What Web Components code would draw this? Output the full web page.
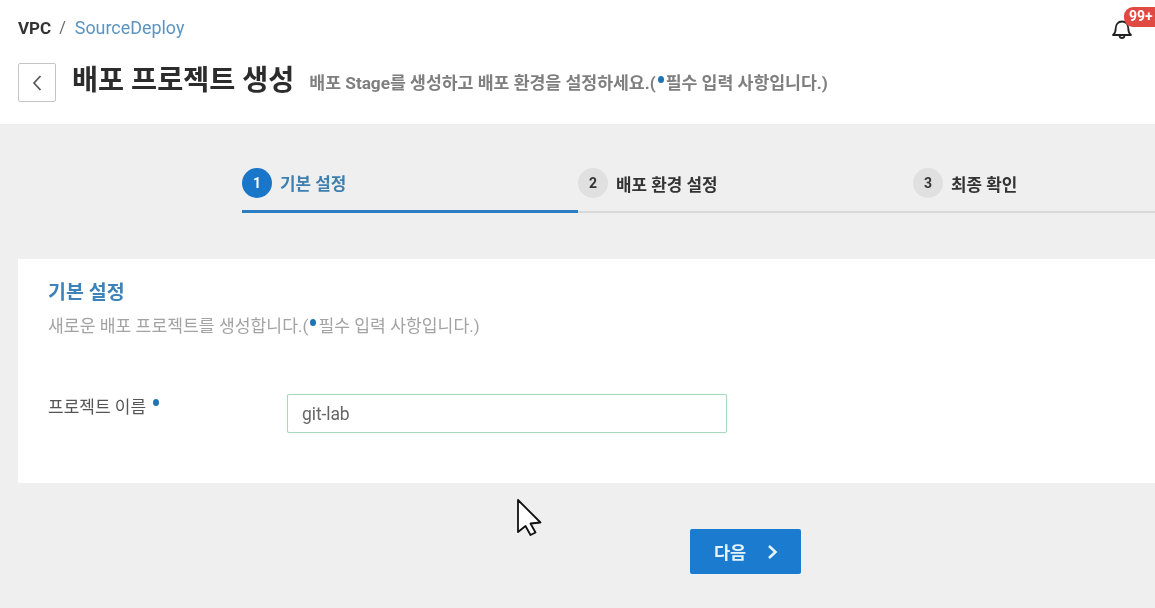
<!DOCTYPE html>
<html lang="ko">
<head>
<meta charset="utf-8">
<title>SourceDeploy</title>
<style>
  html, body { margin: 0; height: 608px; overflow: hidden; background: #efefef; }
  body { font-family: Roboto, "Noto Sans CJK KR", sans-serif; color: #333; }
</style>
</head>
<body>
<deploy-page></deploy-page>
<script>
const KR = `Roboto, "Noto Sans CJK KR", sans-serif`;

class PageHeader extends HTMLElement {
  constructor() {
    super();
    this.attachShadow({ mode: 'open' }).innerHTML = `
      <style>
        :host { display: block; height: 124px; background: #fff; padding: 17px 0 0 18px; box-sizing: border-box; position: relative; font-family: ${KR}; }
        .crumbs { display: flex; align-items: center; height: 21px; color: #333; }
        .crumbs b { font-weight: 700; font-size: 17px; }
        .crumbs i { font-style: normal; color: #666; font-size: 16px; margin: 0 9px 0 4px; }
        .crumbs a { color: #5b94c0; font-size: 17.9px; }
        .title { display: flex; align-items: center; margin-top: 25px; height: 39px; }
        .back { width: 38px; height: 39px; box-sizing: border-box; border: 1px solid #c4c4c4; border-radius: 2px; background: #fff; display: flex; align-items: center; justify-content: center; padding: 0; }
        h1 { margin: -3px 0 0 16px; font-size: 28.3px; font-weight: 700; color: #2c2c2c; white-space: nowrap; line-height: 38px; }
        p { margin: -3px 0 0 15px; font-size: 17.3px; font-weight: 700; color: #7f7f7f; white-space: nowrap; letter-spacing: -0.05px; }
        p em { display: inline-block; width: 6px; height: 7px; border-radius: 50%; background: #1f74b5; margin: 0 2px 0 2px; vertical-align: 6px; }
        .bell { position: absolute; left: 1110px; top: 17px; width: 24px; height: 22px; }
        .badge { position: absolute; left: 1124px; top: 7px; width: 36px; height: 20px; box-sizing: border-box; padding-left: 5px; border-radius: 9px 0 0 9px; background: #e04a42; color: #fff; font-size: 14px; font-weight: 700; line-height: 19px; }
      </style>
      <div class="crumbs"><b>VPC</b>&nbsp;<i>/</i><a>SourceDeploy</a></div>
      <div class="title">
        <button class="back" aria-label="뒤로">
          <svg width="12" height="18" viewBox="0 0 12 18" fill="none" stroke="#555" stroke-width="1.7"><path d="M9.500 2 3 9l6.500 7"/></svg>
        </button>
        <h1>배포 프로젝트 생성</h1>
        <p>배포 Stage를 생성하고 배포 환경을 설정하세요.(<em></em>필수 입력 사항입니다.)</p>
      </div>
      <svg class="bell" viewBox="0 0 24 22" fill="none" stroke="#222" stroke-width="1.8">
        <path d="M3 18c2-1.500 2.700-3 2.700-6.500C5.700 7.500 8 4.500 12 4.500s6.300 3 6.300 7c0 3.500.7 5 2.700 6.500z" stroke-linejoin="round"/>
        <path d="M9.500 19c.3 1.500 1.200 2 2.500 2s2.200-.5 2.500-2"/>
      </svg>
      <span class="badge">99+</span>
    `;
  }
}
customElements.define('page-header', PageHeader);

class StepItem extends HTMLElement {
  constructor() {
    super();
    this.attachShadow({ mode: 'open' }).innerHTML = `
      <style>
        :host { display: flex; align-items: center; gap: 8px; box-sizing: border-box; height: 58px; border-bottom: 2px solid #d8d8d8; font-family: ${KR}; font-size: 16.9px; font-weight: 700; color: #333; }
        :host([active]) { border-bottom: 3px solid #2a7dc0; color: #3f7fb0; }
        .num { width: 30px; height: 30px; border-radius: 50%; background: #e0e0e0; color: #333; display: flex; align-items: center; justify-content: center; font-size: 14px; font-weight: 700; }
        :host([active]) .num { background: #1976c8; color: #fff; }
      </style>
      <span class="num"></span><slot></slot>
    `;
  }
  connectedCallback() {
    this.shadowRoot.querySelector('.num').textContent = this.getAttribute('num');
  }
}
customElements.define('step-item', StepItem);

class StepBar extends HTMLElement {
  constructor() {
    super();
    this.attachShadow({ mode: 'open' }).innerHTML = `
      <style>
        :host { display: grid; grid-template-columns: 336px 335px 1fr; margin: 31px 0 0 242px; }
      </style>
      <slot></slot>
    `;
  }
}
customElements.define('step-bar', StepBar);

class FormCard extends HTMLElement {
  constructor() {
    super();
    this.attachShadow({ mode: 'open' }).innerHTML = `
      <style>
        :host { display: block; box-sizing: border-box; height: 224px; margin: 46px 0 0 18px; padding: 21px 30px 0; background: #fff; font-family: ${KR}; }
        h2 { margin: 0; font-size: 19.5px; font-weight: 700; line-height: 26px; color: #3d82b8; }
        p { margin: 10px 0 0; font-size: 17.2px; line-height: 20px; color: #a3a3a3; white-space: nowrap; }
        p em, label em { display: inline-block; width: 6px; height: 7px; border-radius: 50%; background: #1f74b5; margin: 0 2px; vertical-align: 6px; }
        .row { display: flex; margin-top: 58px; }
        label { width: 239px; font-size: 17px; line-height: 20px; color: #555; padding-top: 3px; white-space: nowrap; }
        label em { margin-left: 3px; vertical-align: 7px; }
        input { width: 440px; height: 39px; box-sizing: border-box; border: 1px solid #a9d8bd; border-radius: 2px; padding: 0 14px; font: 17.5px ${KR}; letter-spacing: -0.1px; color: #666; background: #fff; outline: none; box-shadow: 0 0 1px #b6e5c9; }
      </style>
      <h2><slot name="title"></slot></h2>
      <p>새로운 배포 프로젝트를 생성합니다.(<em></em>필수 입력 사항입니다.)</p>
      <div class="row">
        <label>프로젝트 이름 <em></em></label>
        <input type="text" value="git-lab">
      </div>
    `;
  }
}
customElements.define('form-card', FormCard);

class NextButton extends HTMLElement {
  constructor() {
    super();
    this.attachShadow({ mode: 'open' }).innerHTML = `
      <style>
        :host { display: block; width: 111px; margin: 46px auto 0; position: relative; left: 168px; }
        button { width: 111px; height: 45px; border: 0; border-radius: 2px; background: #1b7bcf; color: #e6f3fc; font: 700 17.5px ${KR}; display: flex; align-items: center; justify-content: center; gap: 21px; padding: 0 0 0 1px; }
      </style>
      <button><slot></slot>
        <svg width="11" height="16" viewBox="0 0 11 16" fill="none" stroke="#e6f3fc" stroke-width="2.600"><path d="M2 2l6.500 6L2 14"/></svg>
      </button>
    `;
  }
}
customElements.define('next-button', NextButton);

class MouseCursor extends HTMLElement {
  constructor() {
    super();
    this.attachShadow({ mode: 'open' }).innerHTML = `
      <style>
        :host { position: absolute; left: 517px; top: 499px; width: 26px; height: 38px; }
      </style>
      <svg width="26" height="38" viewBox="0 0 26 38">
        <path d="M1 1v32l7.500-6 5 9 5-2.500-5-9 10-1z" fill="#fff" stroke="#111" stroke-width="1.800" stroke-linejoin="round"/>
      </svg>
    `;
  }
}
customElements.define('mouse-cursor', MouseCursor);

class DeployPage extends HTMLElement {
  constructor() {
    super();
    this.attachShadow({ mode: 'open' }).innerHTML = `
      <style>
        :host { display: block; height: 608px; background: #efefef; overflow: hidden; position: relative; filter: blur(0.4px); }
      </style>
      <page-header></page-header>
      <step-bar>
        <step-item num="1" active>기본 설정</step-item>
        <step-item num="2">배포 환경 설정</step-item>
        <step-item num="3">최종 확인</step-item>
      </step-bar>
      <form-card><span slot="title">기본 설정</span></form-card>
      <next-button>다음</next-button>
      <mouse-cursor></mouse-cursor>
    `;
  }
}
customElements.define('deploy-page', DeployPage);
</script>
</body>
</html>
